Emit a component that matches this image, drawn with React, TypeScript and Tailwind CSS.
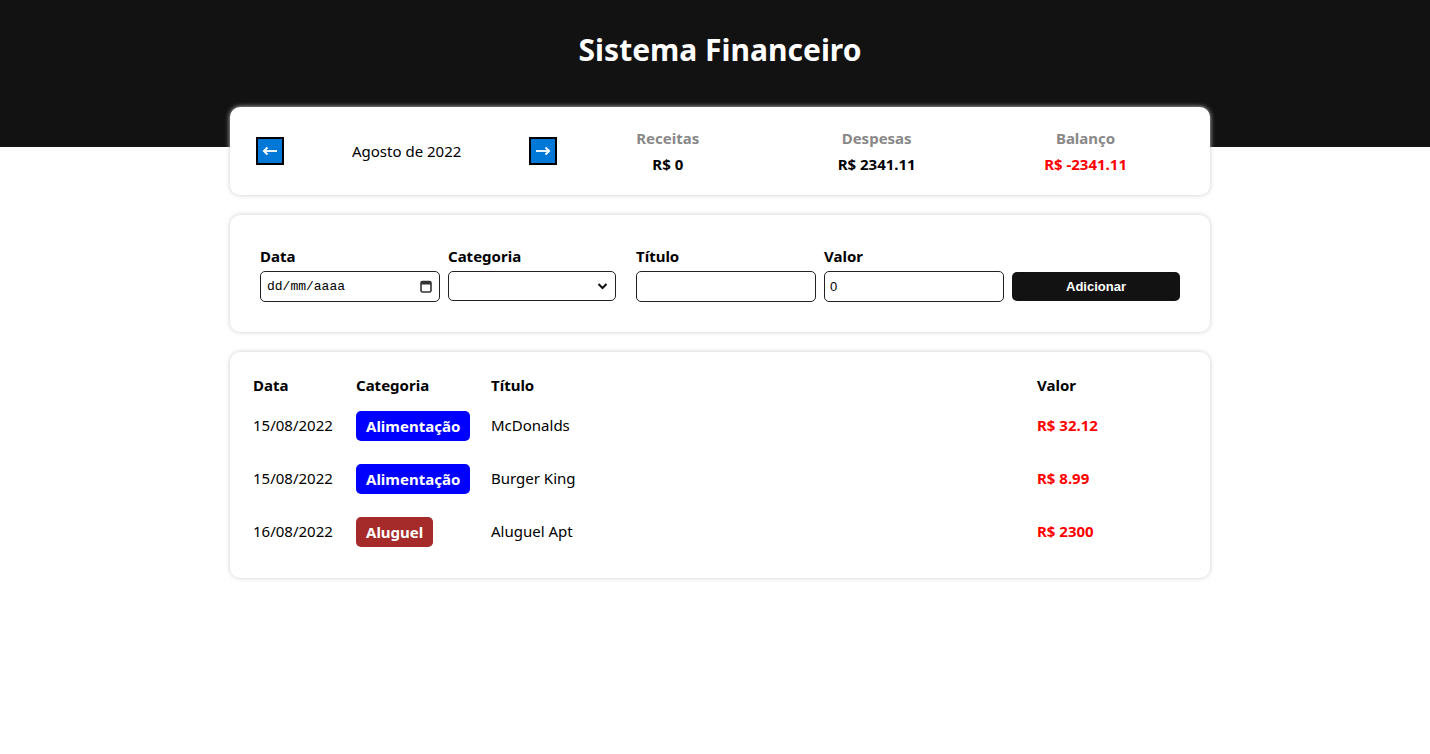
const items = [
  { date: "15/08/2022", category: "Alimentação", color: "bg-[#0000ff]", title: "McDonalds", value: "R$ 32.12" },
  { date: "15/08/2022", category: "Alimentação", color: "bg-[#0000ff]", title: "Burger King", value: "R$ 8.99" },
  { date: "16/08/2022", category: "Aluguel", color: "bg-[#a52a2a]", title: "Aluguel Apt", value: "R$ 2300" },
];

const font = "font-['Noto_Sans',sans-serif]";

function InfoItem({ label, value, red }: { label: string; value: string; red?: boolean }) {
  return (
    <div className="flex-1 flex flex-col items-center">
      <div className="text-[15px] leading-[26px] font-bold text-[#888]">{label}</div>
      <div className={`text-[15px] leading-[26px] font-bold ${red ? "text-[#ff0000]" : "text-black"}`}>{value}</div>
    </div>
  );
}

function ArrowButton({ dir }: { dir: "left" | "right" }) {
  return (
    <button className="mx-1.5 w-7 h-7 bg-[#0078d7] border-2 border-black flex items-center justify-center">
      <svg width="16" height="10" viewBox="0 0 16 10" className={dir === "right" ? "rotate-180" : ""}>
        <path d="M2 5 H15" stroke="white" strokeWidth="1.8" />
        <path d="M5.5 1.5 L1.8 5 L5.5 8.5" fill="none" stroke="white" strokeWidth="1.8" />
      </svg>
    </button>
  );
}

export default function App() {
  return (
    <div className={`min-h-screen bg-white text-black ${font}`}>
      <div className="h-[147px] bg-[#121212] pt-[27px] pl-[10px] text-center">
        <h1 className="text-[30px] leading-[46px] font-bold text-white">Sistema Financeiro</h1>
      </div>

      <div className="pl-[10px]">
        <div className="w-[980px] mx-auto -mt-[40px] flex flex-col gap-5">
          {/* resumo do mes */}
          <div className="bg-white rounded-[10px] shadow-[0_0_5px_#ccc] px-5 py-[18px] flex items-center">
            <div className="flex-1 flex items-center">
              <ArrowButton dir="left" />
              <div className="flex-1 text-center text-[15px]">Agosto de 2022</div>
              <ArrowButton dir="right" />
            </div>
            <div className="flex-[2] flex">
              <InfoItem label="Receitas" value="R$ 0" />
              <InfoItem label="Despesas" value="R$ 2341.11" />
              <InfoItem label="Balanço" value="R$ -2341.11" red />
            </div>
          </div>

          {/* formulario */}
          <div className="bg-white rounded-[10px] shadow-[0_0_5px_#ccc] p-5 flex items-end">
            <label className="flex-1 min-w-0 m-2.5 flex flex-col">
              <span className="text-[15px] leading-[22px] font-bold">Data</span>
              <div className="mt-1 w-[180px] shrink-0 h-[31px] border border-[#222] rounded-[5px] flex items-center justify-between pl-[6px] pr-[7px]">
                <span className="font-['Liberation_Mono',monospace] text-[13px]">dd/mm/aaaa</span>
                <svg width="12" height="13" viewBox="0 0 12 13">
                  <rect x="1" y="1.5" width="10" height="10.5" rx="1.5" fill="none" stroke="#333" strokeWidth="1.6" />
                  <rect x="1" y="1.5" width="10" height="3" fill="#333" />
                </svg>
              </div>
            </label>
            <label className="flex-1 min-w-0 m-2.5 flex flex-col">
              <span className="text-[15px] leading-[22px] font-bold">Categoria</span>
              <div className="mt-1 mb-[1px] w-full h-[30px] border border-[#222] rounded-[5px] flex items-center justify-end pr-[7px]">
                <svg width="11" height="8" viewBox="0 0 11 8">
                  <path d="M1.5 2 L5.5 6 L9.5 2" fill="none" stroke="#111" strokeWidth="2" />
                </svg>
              </div>
            </label>
            <label className="flex-1 min-w-0 m-2.5 flex flex-col">
              <span className="text-[15px] leading-[22px] font-bold">Título</span>
              <div className="mt-1 w-[180px] shrink-0 h-[31px] border border-[#222] rounded-[5px]" />
            </label>
            <label className="flex-1 min-w-0 m-2.5 flex flex-col">
              <span className="text-[15px] leading-[22px] font-bold">Valor</span>
              <div className="mt-1 w-[180px] shrink-0 h-[31px] border border-[#222] rounded-[5px] flex items-center pl-[5px] font-['Liberation_Sans',sans-serif] text-[13px]">
                0
              </div>
            </label>
            <div className="flex-1 min-w-0 m-2.5 flex flex-col">
              <button className="mb-[1px] w-full h-[29px] bg-[#121212] rounded-[5px] text-white font-bold text-[13px] font-['Liberation_Sans',sans-serif]">
                Adicionar
              </button>
            </div>
          </div>

          {/* tabela */}
          <div className="bg-white rounded-[10px] shadow-[0_0_5px_#ccc] p-5 text-[15px]">
            <div className="grid grid-cols-[103px_135px_1fr_156px] h-[27px] items-center font-bold">
              <div className="pl-[3px]">Data</div>
              <div className="pl-[3px]">Categoria</div>
              <div className="pl-[3px]">Título</div>
              <div className="pl-[3px]">Valor</div>
            </div>
            {items.map((item, i) => (
              <div key={i} className="grid grid-cols-[103px_135px_1fr_156px] h-[53px] items-center">
                <div className="pl-[3px]">{item.date}</div>
                <div className="pl-[3px]">
                  <span className={`inline-block ${item.color} text-white font-bold px-[10px] leading-[30px] rounded-[5px]`}>
                    {item.category}
                  </span>
                </div>
                <div className="pl-[3px]">{item.title}</div>
                <div className="pl-[3px] font-bold text-[#ff0000]">{item.value}</div>
              </div>
            ))}
          </div>
        </div>
      </div>
    </div>
  );
}
